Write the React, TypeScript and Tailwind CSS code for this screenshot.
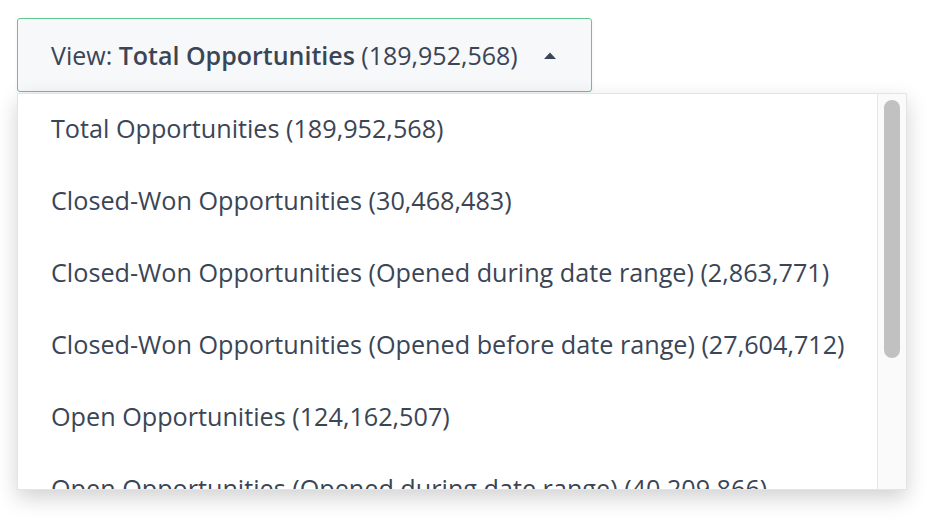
import React from 'react';

const options = [
  'Total Opportunities (189,952,568)',
  'Closed-Won Opportunities (30,468,483)',
  'Closed-Won Opportunities (Opened during date range) (2,863,771)',
  'Closed-Won Opportunities (Opened before date range) (27,604,712)',
  'Open Opportunities (124,162,507)',
  'Open Opportunities (Opened during date range) (40,209,866)',
  'Open Opportunities (Opened before date range) (83,952,641)',
];

const App: React.FC = () => {
  return (
    <div className="w-[932px] h-[522px] bg-white overflow-hidden font-['Open_Sans',sans-serif] text-[#3a4556]">
      <div className="pt-[18px] pl-[17px]">
        <button className="h-[74px] w-[575px] flex items-center pl-[33px] pr-[34px] border border-[#62c98d] rounded-[3px] bg-[#f7f8fa] text-[25px] leading-none shadow-[0_1px_4px_rgba(0,0,0,0.06)]">
          <span>View:&nbsp;</span>
          <span className="font-semibold">Total Opportunities</span>
          <span>&nbsp;(189,952,568)</span>
          <svg className="ml-auto" width="14" height="9" viewBox="0 0 14 9">
            <path d="M1 8 L7 1.5 L13 8 Z" fill="#3a4556" />
          </svg>
        </button>
        <div className="mt-px w-[890px] h-[397px] flex bg-white border border-[#e4e4e4] shadow-[0_8px_20px_rgba(0,0,0,0.18)] overflow-hidden">
          <div className="flex-1 overflow-hidden">
            {options.map((o) => (
              <div key={o} className="h-[72px] flex items-center pl-[33px] pb-[2px] text-[25.2px] leading-none whitespace-nowrap">
                {o}
              </div>
            ))}
          </div>
          <div className="w-[29px] bg-[#fafafa] border-l border-[#e6e6e6] pt-[6px] flex justify-center">
            <div className="w-[16px] h-[258px] rounded-full bg-[#c1c1c1]" />
          </div>
        </div>
      </div>
    </div>
  );
};

export default App;
